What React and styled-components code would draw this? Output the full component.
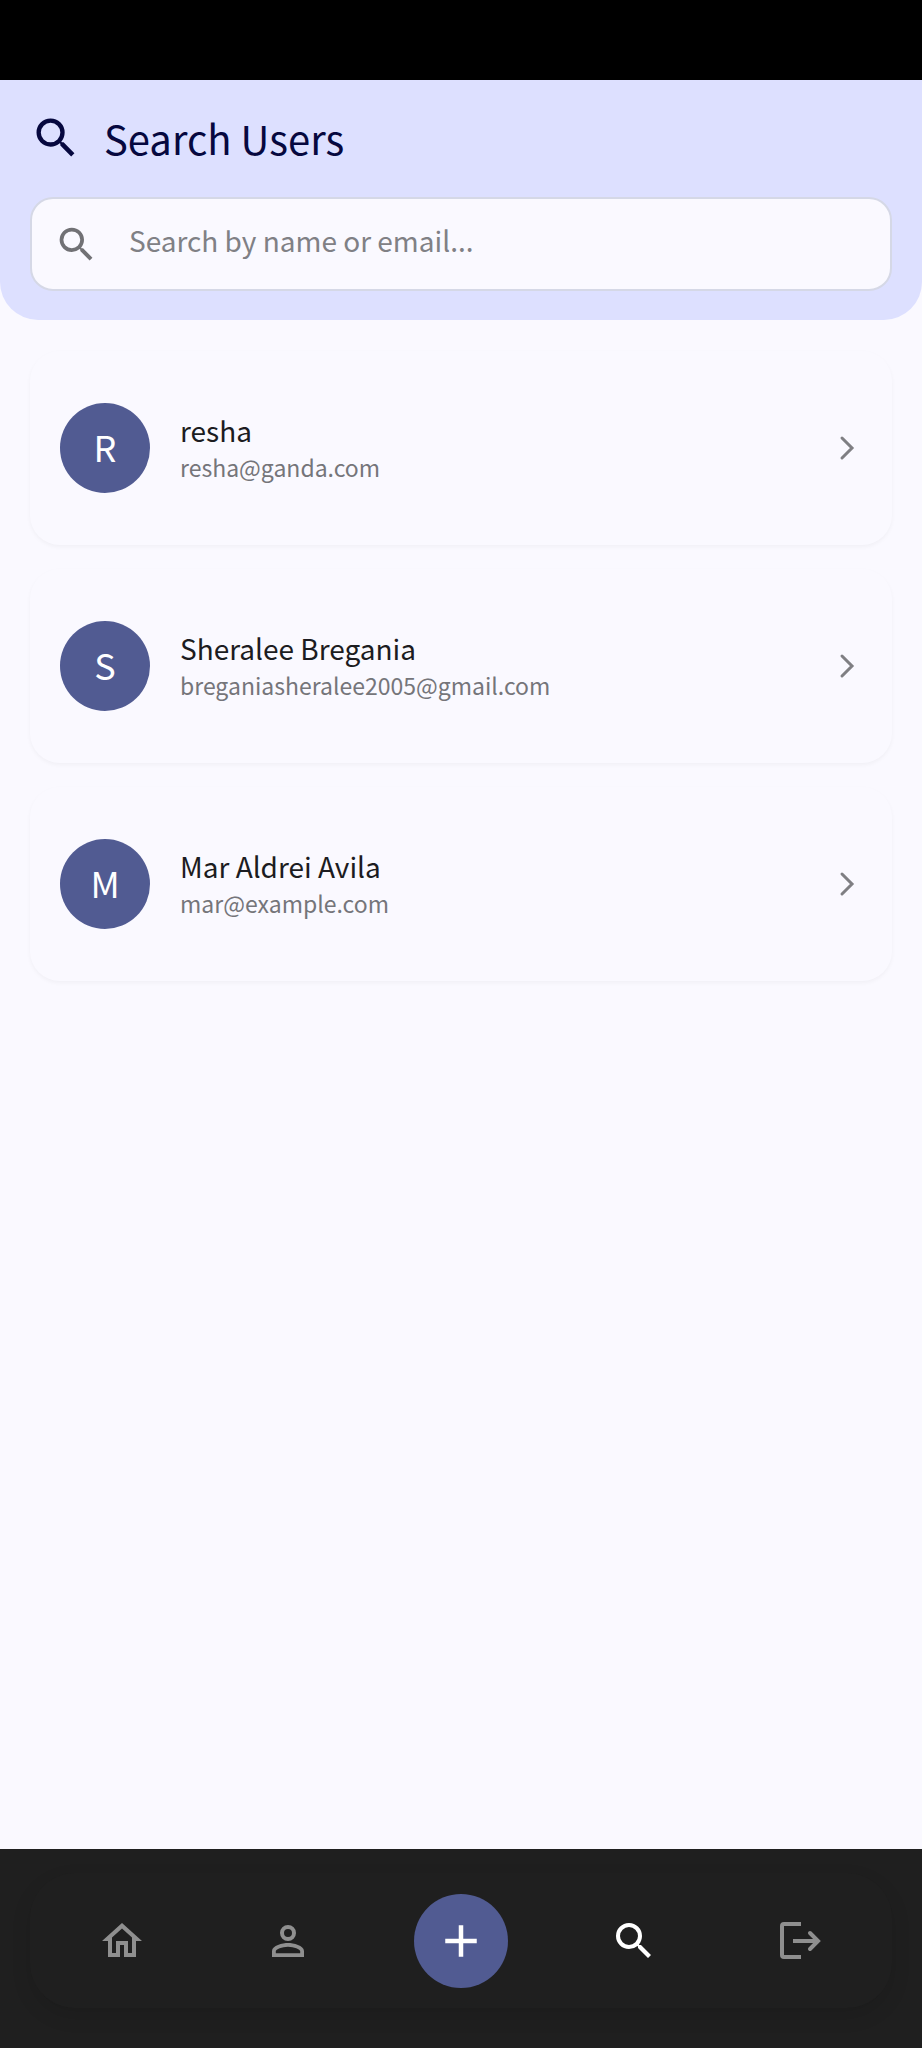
import React from "react";
import styled, { createGlobalStyle } from "styled-components";

const colors = {
  surface: "#faf9ff",
  header: "#dde0ff",
  title: "#06083f",
  primary: "#515b92",
  outline: "#d5d8e6",
  text: "#1c1c21",
  muted: "#75757a",
  nav: "#1f1f1f",
  navIcon: "#8f8f8f",
};

const GlobalStyle = createGlobalStyle`
  * { box-sizing: border-box; }
  body {
    margin: 0;
    background: ${colors.surface};
    font-family: "Noto Sans CJK SC", "Noto Sans", sans-serif;
  }
`;

const Screen = styled.div`
  display: flex;
  flex-direction: column;
  min-height: 100vh;
`;

const StatusBar = styled.div`
  height: 80px;
  background: #000;
`;

const Header = styled.header`
  display: flex;
  flex-direction: column;
  gap: 31px;
  padding: 30px 30px 29px;
  background: ${colors.header};
  border-radius: 0 0 38px 38px;
`;

const TitleRow = styled.div`
  display: flex;
  align-items: center;
  gap: 22px;
  height: 56px;
`;

const Title = styled.h1`
  margin: 0;
  color: ${colors.title};
  font-size: 40px;
  font-weight: 400;
  line-height: 56px;
`;

const Svg = styled.svg`
  display: block;
  flex: none;
  width: ${(p) => p.$size}px;
  height: ${(p) => p.$size}px;
  color: ${(p) => p.$color || "inherit"};
`;

const SearchField = styled.label`
  display: flex;
  align-items: center;
  gap: 30px;
  height: 94px;
  padding: 0 22px;
  background: ${colors.surface};
  border: 2px solid ${colors.outline};
  border-radius: 23px;
`;

const SearchInput = styled.input`
  flex: 1;
  min-width: 0;
  height: 40px;
  margin: 0 0 8px;
  padding: 0;
  border: 0;
  outline: 0;
  background: transparent;
  color: ${colors.text};
  font: inherit;
  font-size: 28px;
  line-height: 40px;
  &::placeholder { color: #808085; opacity: 1; }
`;

const UserList = styled.main`
  flex: 1;
  display: flex;
  flex-direction: column;
  gap: 24px;
  padding: 31px 30px;
`;

const UserCard = styled.a`
  display: flex;
  align-items: center;
  gap: 30px;
  height: 194px;
  padding: 0 30px;
  background: ${colors.surface};
  border-radius: 30px;
  box-shadow: 0 2px 4px rgba(0, 0, 0, 0.04);
  color: inherit;
  text-decoration: none;
`;

const Avatar = styled.div`
  display: flex;
  align-items: center;
  justify-content: center;
  flex: none;
  width: 90px;
  height: 90px;
  padding-bottom: 4px;
  border-radius: 50%;
  background: ${colors.primary};
  color: #fff;
  font-size: 36px;
  line-height: 44px;
`;

const UserText = styled.div`
  flex: 1;
  min-width: 0;
`;

const UserName = styled.div`
  color: ${colors.text};
  font-size: 28px;
  line-height: 38px;
`;

const UserEmail = styled.div`
  color: ${colors.muted};
  font-size: 23px;
  line-height: 36px;
`;

const NavBar = styled.nav`
  padding: 24px 30px 40px;
  background: ${colors.nav};
`;

const NavPill = styled.div`
  display: flex;
  align-items: center;
  justify-content: space-around;
  height: 135px;
  padding: 0 9px;
  border-radius: 45px;
  background: ${colors.nav};
  box-shadow: 0 8px 20px rgba(0, 0, 0, 0.1);
`;

const NavButton = styled.button`
  display: flex;
  align-items: center;
  justify-content: center;
  width: 80px;
  height: 80px;
  padding: 0;
  border: 0;
  background: transparent;
  color: ${(p) => (p.$active ? "#fff" : colors.navIcon)};
`;

const AddButton = styled(NavButton)`
  width: 94px;
  height: 94px;
  border-radius: 50%;
  background: ${colors.primary};
  color: #fff;
`;

const paths = {
  search:
    "M9.5 3A6.5 6.5 0 0 1 16 9.5c0 1.61-.59 3.09-1.56 4.23l.27.27h.79l5 5-1.5 1.5-5-5v-.79l-.27-.27A6.52 6.52 0 0 1 9.5 16 6.5 6.5 0 1 1 9.5 3m0 2a4.5 4.5 0 1 0 0 9 4.5 4.5 0 0 0 0-9",
  home: "M12 5.69l5 4.5V18h-2v-6H9v6H7v-7.81l5-4.5M12 3L2 12h3v8h6v-6h2v6h6v-8h3L12 3",
  person:
    "M12 4a4 4 0 1 1 0 8 4 4 0 0 1 0-8m0 2a2 2 0 1 0 0 4 2 2 0 0 0 0-4m0 7c2.67 0 8 1.33 8 4v3H4v-3c0-2.67 5.33-4 8-4m0 1.9c-2.97 0-6.1 1.46-6.1 2.1v1.1h12.2V17c0-.64-3.13-2.1-6.1-2.1",
  plus: "M19 13h-6v6h-2v-6H5v-2h6V5h2v6h6z",
};

function Icon({ name, size, color }) {
  return (
    <Svg viewBox="0 0 24 24" $size={size} $color={color} aria-hidden="true">
      <path d={paths[name]} fill="currentColor" fillRule="evenodd" />
    </Svg>
  );
}

function ChevronIcon() {
  return (
    <Svg
      viewBox="0 0 30 30"
      $size={30}
      $color="#7f7f83"
      fill="none"
      stroke="currentColor"
      strokeWidth="3"
      strokeLinecap="round"
      aria-hidden="true"
    >
      <path d="M10 5L20 15L10 25" />
    </Svg>
  );
}

function LogoutIcon() {
  return (
    <Svg viewBox="0 0 48 48" $size={48} fill="none" stroke="currentColor" strokeWidth="4" aria-hidden="true">
      <path d="M25 7H8Q6 7 6 9V38Q6 40 8 40H25" />
      <path d="M17 24H42" />
      <path d="M34 16l8 8-8 8" strokeLinecap="round" />
    </Svg>
  );
}

const users = [
  { name: "resha", email: "resha@ganda.com" },
  { name: "Sheralee Bregania", email: "breganiasheralee2005@gmail.com" },
  { name: "Mar Aldrei Avila", email: "mar@example.com" },
];

export default function App() {
  return (
    <>
      <GlobalStyle />
      <Screen>
        <StatusBar />
        <Header>
          <TitleRow>
            <Icon name="search" size={52} color={colors.title} />
            <Title>Search Users</Title>
          </TitleRow>
          <SearchField>
            <Icon name="search" size={45} color="#717175" />
            <SearchInput type="text" aria-label="Search users" placeholder="Search by name or email..." />
          </SearchField>
        </Header>
        <UserList>
          {users.map((user) => (
            <UserCard key={user.email} href="#">
              <Avatar>{user.name[0].toUpperCase()}</Avatar>
              <UserText>
                <UserName>{user.name}</UserName>
                <UserEmail>{user.email}</UserEmail>
              </UserText>
              <ChevronIcon />
            </UserCard>
          ))}
        </UserList>
        <NavBar>
          <NavPill>
            <NavButton aria-label="Home"><Icon name="home" size={48} /></NavButton>
            <NavButton aria-label="Profile"><Icon name="person" size={48} /></NavButton>
            <AddButton aria-label="Add"><Icon name="plus" size={54} /></AddButton>
            <NavButton aria-label="Search" $active><Icon name="search" size={48} /></NavButton>
            <NavButton aria-label="Log out"><LogoutIcon /></NavButton>
          </NavPill>
        </NavBar>
      </Screen>
    </>
  );
}
